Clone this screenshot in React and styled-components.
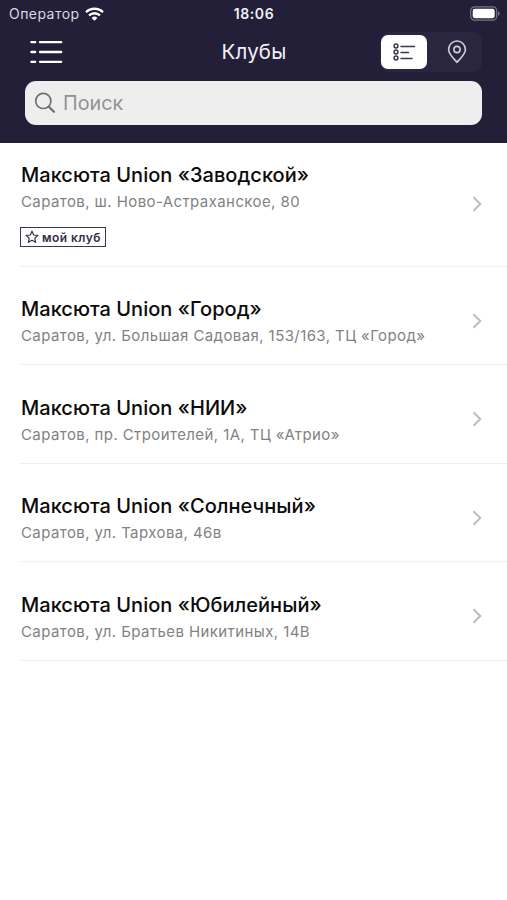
import React from 'react';
import styled, { createGlobalStyle } from 'styled-components';

const GlobalStyle = createGlobalStyle`
  * {
    box-sizing: border-box;
  }

  body {
    margin: 0;
    background: #fff;
    font-family: Inter, 'Liberation Sans', sans-serif;
  }

  button {
    padding: 0;
    border: 0;
    background: none;
    font: inherit;
    cursor: pointer;
  }
`;

const Screen = styled.div`
  width: 507px;
  min-height: 900px;
  background: #fff;
`;

const Header = styled.header`
  height: 142.5px;
  background: #231f38;
  color: #f1f0f5;
`;

const StatusBar = styled.div`
  display: grid;
  grid-template-columns: 1fr auto 1fr;
  align-items: center;
  height: 27px;
  padding: 0 7px 0 9px;
`;

const Carrier = styled.div`
  display: flex;
  align-items: center;
  gap: 5px;
  font-size: 14px;
  letter-spacing: 0.45px;
  color: #d9d7e2;
`;

const Time = styled.div`
  margin-right: 1px;
  font-size: 14px;
  font-weight: 600;
  letter-spacing: 0.6px;
`;

const Battery = styled.svg`
  justify-self: end;
`;

const NavBar = styled.div`
  display: grid;
  grid-template-columns: 1fr auto 1fr;
  align-items: center;
  height: 50px;
  padding: 0 25px 0 30px;
`;

const MenuButton = styled.button`
  display: flex;
  justify-self: start;
`;

const Title = styled.h1`
  margin: 0 4px 0 0;
  font-size: 20.5px;
  font-weight: 400;
  line-height: 26px;
  letter-spacing: 0.2px;
`;

const Switcher = styled.div`
  display: flex;
  justify-self: end;
  align-items: center;
  width: 102px;
  height: 40px;
  padding: 0 1px;
  border-radius: 9px;
  background: #2b2640;
`;

const SwitchButton = styled.button`
  display: flex;
  flex: none;
  align-items: center;
  justify-content: center;
  width: ${({ $active }) => ($active ? '46px' : '54px')};
  height: 34px;
  padding-left: ${({ $active }) => ($active ? '0' : '6px')};
  border-radius: 7px;
  background: ${({ $active }) => ($active ? '#fff' : 'transparent')};
`;

const Search = styled.label`
  display: flex;
  align-items: center;
  gap: 7px;
  height: 44px;
  margin: 3.5px 25px 0;
  padding: 0 10px 0 9px;
  border-radius: 11px;
  background: #eee;
`;

const SearchInput = styled.input`
  flex: 1;
  min-width: 0;
  padding: 1px 0 0;
  border: 0;
  outline: 0;
  background: none;
  font: 400 19.8px Inter, sans-serif;
  color: #222;

  &::placeholder {
    color: #929292;
    opacity: 1;
  }
`;

const ClubList = styled.ul`
  margin: 0;
  padding: 0 0 0 20px;
  list-style: none;
`;

const ClubRow = styled.li`
  display: flex;
  align-items: center;
  justify-content: space-between;
  height: ${({ $own }) => ($own ? '124px' : '98.5px')};
  padding: ${({ $own }) => ($own ? '0' : '11px')} 24px 0 1px;
  border-bottom: 1px solid #f1f1f1;
  cursor: pointer;
`;

const ClubInfo = styled.div`
  padding-top: ${({ $own }) => ($own ? '0' : '3px')};
`;

const ClubName = styled.h2`
  margin: 0;
  font-size: 20px;
  font-weight: 500;
  line-height: 28px;
  letter-spacing: 0.03px;
  white-space: nowrap;
  color: #0b0b0b;
`;

const Address = styled.p`
  margin: 0;
  font-size: 15px;
  line-height: 26px;
  letter-spacing: 0.41px;
  white-space: nowrap;
  color: #828282;
`;

const Badge = styled.span`
  display: flex;
  align-items: center;
  gap: 3px;
  width: 86px;
  height: 20px;
  margin: 12px 0 0 -1px;
  padding-left: 4px;
  border: 1.5px solid #3a3650;
  font-size: 12px;
  font-weight: 600;
  letter-spacing: 0.45px;
  white-space: nowrap;
  color: #343047;
`;

const clubs = [
  { name: 'Максюта Union «Заводской»', address: 'Саратов, ш. Ново-Астраханское, 80', own: true },
  { name: 'Максюта Union «Город»', address: 'Саратов, ул. Большая Садовая, 153/163, ТЦ «Город»' },
  { name: 'Максюта Union «НИИ»', address: 'Саратов, пр. Строителей, 1А, ТЦ «Атрио»' },
  { name: 'Максюта Union «Солнечный»', address: 'Саратов, ул. Тархова, 46в' },
  { name: 'Максюта Union «Юбилейный»', address: 'Саратов, ул. Братьев Никитиных, 14В' },
];

function WifiIcon() {
  return (
    <svg width="19" height="14" viewBox="0 0 19 14" fill="none" stroke="#fff" strokeWidth="2.3">
      <path d="M1 5.2a12.2 12.2 0 0 1 17 0" />
      <path d="M4 8.5a7.8 7.8 0 0 1 11 0" />
      <path d="M9.5 13.8 6.6 10.9a4.1 4.1 0 0 1 5.8 0z" fill="#fff" stroke="none" />
    </svg>
  );
}

function BatteryIcon() {
  return (
    <Battery width="30" height="15" viewBox="0 0 30 15">
      <rect x="0.7" y="0.9" width="26" height="13.2" rx="3.8" fill="none" stroke="#77748a" strokeWidth="1.2" />
      <rect x="2.7" y="2.8" width="22" height="9.4" rx="2.1" fill="#fff" />
      <path d="M28 5.2c2.2.8 2.2 3.8 0 4.6z" fill="#77748a" />
    </Battery>
  );
}

function MenuIcon() {
  return (
    <svg width="33" height="24" viewBox="0 0 33 24" stroke="#fff" strokeWidth="2.3" strokeLinecap="round">
      <path d="M1.4 2.2h3.8M10 2.2h21.2M1.4 12h3.8M10 12h21.2M1.4 21.8h3.8M10 21.8h21.2" />
    </svg>
  );
}

function ListIcon() {
  return (
    <svg width="24" height="20" viewBox="0 0 24 20" fill="none" stroke="#3b374e" strokeWidth="1.5" strokeLinecap="round">
      <circle cx="4" cy="4" r="1.9" />
      <circle cx="4" cy="10" r="1.9" />
      <circle cx="4" cy="16" r="1.9" />
      <path d="M9 4.5h13.5M9 10.5h7.5M9 16.5h11" />
    </svg>
  );
}

function PinIcon() {
  return (
    <svg width="20" height="24" viewBox="0 0 20 24" fill="none" stroke="#cfcdd9" strokeWidth="1.6">
      <path d="M10 22.3C7 18.8 1.6 14.2 1.6 9.4a8.4 8.4 0 0 1 16.8 0c0 4.8-5.4 9.4-8.4 12.9z" strokeLinejoin="round" />
      <circle cx="10" cy="9.5" r="3.1" />
    </svg>
  );
}

function SearchIcon() {
  return (
    <svg width="22" height="22" viewBox="0 0 22 22" fill="none" stroke="#707070" strokeLinecap="round">
      <circle cx="9.3" cy="8.9" r="7.6" strokeWidth="1.7" />
      <path d="m14.9 14.7 5 5" strokeWidth="2.3" />
    </svg>
  );
}

function StarIcon() {
  return (
    <svg width="14" height="14" viewBox="0 0 14 14" fill="none" stroke="#343047" strokeWidth="1.2" strokeLinejoin="round">
      <path d="m7 1.2 1.7 3.8 4.2.4-3.1 2.8.9 4.1L7 10.2l-3.7 2.1.9-4.1L1.1 5.4l4.2-.4z" />
    </svg>
  );
}

function Chevron() {
  return (
    <svg width="12" height="16" viewBox="0 0 12 16" fill="none" stroke="#bdbdbd" strokeWidth="2">
      <path d="m2.5 1.2 6.800 6.800-6.800 6.800" />
    </svg>
  );
}

function ClubItem({ name, address, own }) {
  return (
    <ClubRow $own={own}>
      <ClubInfo $own={own}>
        <ClubName>{name}</ClubName>
        <Address>{address}</Address>
        {own && (
          <Badge>
            <StarIcon />
            мой клуб
          </Badge>
        )}
      </ClubInfo>
      <Chevron />
    </ClubRow>
  );
}

function App() {
  return (
    <Screen>
      <GlobalStyle />
      <Header>
        <StatusBar>
          <Carrier>
            Оператор
            <WifiIcon />
          </Carrier>
          <Time>18:06</Time>
          <BatteryIcon />
        </StatusBar>
        <NavBar>
          <MenuButton aria-label="Меню">
            <MenuIcon />
          </MenuButton>
          <Title>Клубы</Title>
          <Switcher>
            <SwitchButton $active aria-label="Список">
              <ListIcon />
            </SwitchButton>
            <SwitchButton aria-label="Карта">
              <PinIcon />
            </SwitchButton>
          </Switcher>
        </NavBar>
        <Search>
          <SearchIcon />
          <SearchInput placeholder="Поиск" />
        </Search>
      </Header>
      <ClubList>
        {clubs.map((club) => (
          <ClubItem key={club.name} {...club} />
        ))}
      </ClubList>
    </Screen>
  );
}

export default App;
